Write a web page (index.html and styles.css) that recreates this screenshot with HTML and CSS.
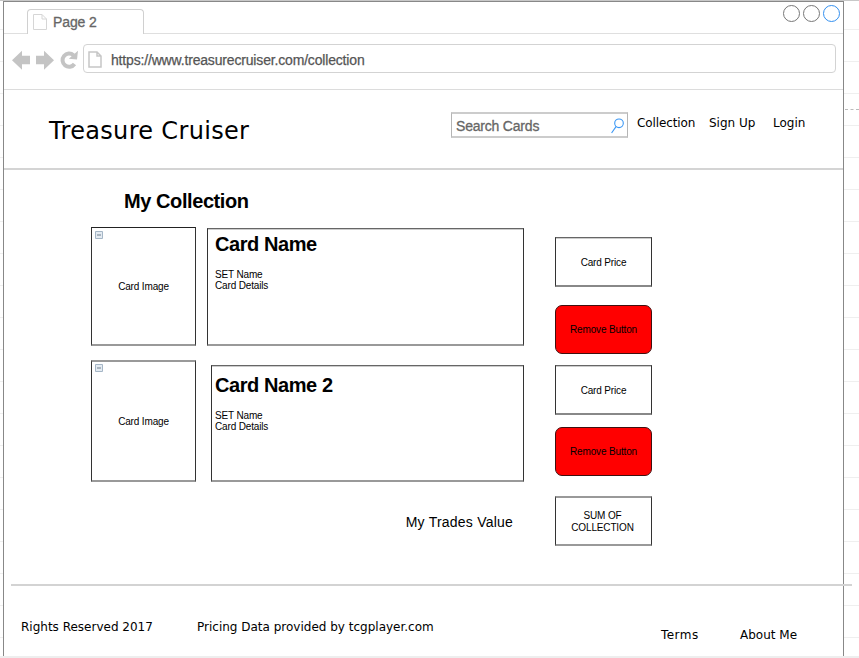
FILE: index.html
```html
<!DOCTYPE html>
<html lang="en">
<head>
<meta charset="utf-8">
<title>Treasure Cruiser</title>
<link rel="stylesheet" href="styles.css">
</head>
<body>
<div class="window">
  <div class="tabs">
    <div class="tab">
      <svg class="tab-icon" width="14" height="16" viewBox="0 0 14 16"><path d="M.5.5H9L13.5 5V15.5H.5ZM9 .5V5H13.5" fill="none" stroke="#d6d6d6"/></svg>
      <span class="tab-title">Page 2</span>
    </div>
    <div class="controls"><i></i><i></i><i class="active"></i></div>
  </div>
  <div class="toolbar">
    <svg class="nav-icons" width="67" height="22" viewBox="0 0 67 22">
      <path d="M0 10.2 10 .7V5.7H18V14.3H10V19.7ZM42 10.2 32 .7V5.7H24V14.3H32V19.7Z" fill="#c4c4c4"/>
      <path d="M62.5 14A6.6 6.6 0 1 1 61.5 5.2" fill="none" stroke="#c4c4c4" stroke-width="4"/>
      <path d="M66 .7 65 9.5 56.8 8.8Z" fill="#c4c4c4"/>
    </svg>
    <div class="address">
      <svg class="file" width="14" height="17" viewBox="0 0 14 17"><path d="M1 1H9L13 5V16H1ZM9 1V5H13" fill="none" stroke="#c6c6c6" stroke-width="1.5"/></svg>
      <span class="url">https://www.treasurecruiser.com/collection</span>
    </div>
  </div>
  <header class="header">
    <div class="brand">Treasure Cruiser</div>
    <div class="search"><span>Search Cards</span>
      <svg width="14" height="16" viewBox="0 0 14 16"><g fill="none" stroke="#3a97f5" stroke-width="1.1"><circle cx="9" cy="5.3" r="4.3"/><path d="M6 8.6 1.6 15"/></g></svg>
    </div>
    <nav class="nav"><span class="n1">Collection</span><span class="n2">Sign Up</span><span class="n3">Login</span></nav>
  </header>
  <main class="main">
    <h1 class="title">My Collection</h1>
    <div class="board">
      <div class="images">
        <div class="box image first"><svg class="collapse" width="8" height="8" viewBox="0 0 8 8"><path d="M.5.5H7.5V7.5H.5Z" fill="#e4ebf2" stroke="#a5b6c6"/><path d="M2 4H6" stroke="#70808e"/></svg><span>Card Image</span></div>
        <div class="box image second"><svg class="collapse" width="8" height="8" viewBox="0 0 8 8"><path d="M.5.5H7.5V7.5H.5Z" fill="#e4ebf2" stroke="#a5b6c6"/><path d="M2 4H6" stroke="#70808e"/></svg><span>Card Image</span></div>
      </div>
      <div class="details">
        <section class="box card one"><h2>Card Name</h2><p>SET Name<br>Card Details</p></section>
        <section class="box card two"><h2>Card Name 2</h2><p>SET Name<br>Card Details</p></section>
        <div class="total-label"><span>My Trades Value</span></div>
      </div>
      <div class="actions">
        <div class="box price">Card Price</div>
        <div class="remove a">Remove Button</div>
        <div class="box price b">Card Price</div>
        <div class="remove b">Remove Button</div>
        <div class="box sum">SUM OF<br>COLLECTION</div>
      </div>
    </div>
  </main>
  <footer class="footer"><span class="f1">Rights Reserved 2017</span><span class="f2">Pricing Data provided by tcgplayer.com</span><span class="f3">Terms</span><span class="f4">About Me</span></footer>
</div>
<div class="margin"></div>
</body>
</html>
```
FILE: styles.css
```css
* { box-sizing: border-box; }
body {
  margin: 0;
  width: 859px;
  height: 658px;
  overflow: hidden;
  display: flex;
  padding-left: 3px;
  color: #000;
  border-top: 1px solid #c8c8c8;
  border-bottom: 2px solid #eee;
  font-family: "Liberation Sans", Arial, sans-serif;
  background: repeating-linear-gradient(#fff 0 29px, #efefef 29px 30px, #fff 30px 32px);
}
svg { display: block; flex: none; }
h1, h2, p { margin: 0; }
.window {
  width: 841px;
  height: 655px;
  flex: none;
  display: flex;
  flex-direction: column;
  background: #fff;
  border: solid #888;
  border-width: 1px 1px 0;
}
.margin {
  height: 109px;
  width: 14px;
  margin-left: 1px;
  border-bottom: 1px dashed #bbb;
}
.tabs {
  height: 32px;
  flex: none;
  display: flex;
  justify-content: space-between;
  align-items: flex-end;
  background: linear-gradient(#dfdfdf, #dfdfdf) bottom / 100% 1px no-repeat;
  padding: 0 3px 0 23px;
}
.tab {
  width: 117px;
  height: 25px;
  display: flex;
  padding: 4px 0 0 5px;
  background: #fff;
  border: 1px solid #d0d0d0;
  border-bottom: 0;
  border-radius: 4px 4px 0 0;
}
.tab-title { margin: -1px 0 0 6px; font-size: 14px; line-height: 18px; letter-spacing: -.1px; color: #666; -webkit-text-stroke: .3px #666; }
.controls { display: flex; gap: 3px; align-self: flex-start; padding-top: 3px; }
.controls i { width: 17px; height: 17px; border: 1px solid #777; border-radius: 50%; }
.controls .active { border-color: #3390f0; }
.toolbar {
  height: 56px;
  flex: none;
  display: flex;
  padding: 10px 7px 0 8px;
  border-bottom: 1px solid #dcdcdc;
}
.nav-icons { margin: 6px 4px 0 0; }
.address {
  flex: 1;
  height: 29px;
  display: flex;
  align-items: center;
  padding-left: 4px;
  border: 1px solid #d3d3d3;
  border-radius: 4px;
}
.file { margin-top: 2px; }
.url { margin: 3px 0 0 9px; font-size: 14px; line-height: 18px; letter-spacing: -.17px; color: #555; -webkit-text-stroke: .25px #555; }
.header {
  height: 80px;
  flex: none;
  display: flex;
  padding-left: 45px;
  border-bottom: 2px solid #d4d4d4;
  font-family: "DejaVu Sans", Verdana, sans-serif;
}
.brand { width: 402px; padding-top: 26px; font-size: 24px; line-height: 30px; letter-spacing: .33px; }
.search {
  width: 177px;
  height: 26px;
  margin-top: 22px;
  display: flex;
  justify-content: space-between;
  padding: 4px 3px 0 4px;
  border: solid #b5b5b5;
  border-width: 2px 1px;
  border-top-color: #ccc;
  border-bottom-color: #ccc;
  font: 14px/16px "Liberation Sans", Arial, sans-serif;
  letter-spacing: -.2px;
  color: #666;
  -webkit-text-stroke: .3px #666;
}
.nav { display: flex; padding: 25px 0 0 9px; font-size: 12px; line-height: 16px; white-space: nowrap; }
.n1 { width: 72px; letter-spacing: -.1px; }
.n2 { width: 64px; }
.main { height: 414px; flex: none; padding: 19px 0 0 87px; }
.title { height: 38px; padding-left: 33px; font-size: 20px; line-height: 24px; letter-spacing: -.42px; }
.board { display: flex; align-items: flex-start; font-size: 10px; line-height: 11px; letter-spacing: -.15px; }
.box {
  border: 1px solid #333;
  border-top-color: #666;
  border-bottom: 2px solid #999;
  box-shadow: inset 0 1px #ccc;
}
.images { width: 105px; display: flex; flex-direction: column; gap: 14px; margin-right: 11px; }
.image { position: relative; display: flex; align-items: center; justify-content: center; }
.image.first { height: 119px; border-top-color: #222; box-shadow: none; }
.image.second { height: 122px; border-top: 2px solid #999; box-shadow: none; }
.collapse { position: absolute; top: 3px; left: 3px; }
.image.second .collapse { top: 2px; }
.details { width: 317px; padding-top: 1px; margin-right: 31px; }
.card { padding: 3px 0 0 7px; }
.card.one { height: 118px; }
.card.two { height: 117px; margin: 19px 0 0 4px; padding: 7px 0 0 3px; }
.card h2 { font-size: 20px; line-height: 24px; margin-bottom: 13px; letter-spacing: -.42px; }
.total-label { display: flex; justify-content: flex-end; padding: 32px 11px 0 0; font-size: 14px; line-height: 16px; letter-spacing: .22px; }
.actions { width: 97px; padding-top: 10px; text-align: center; }
.price, .remove, .sum { height: 50px; display: flex; align-items: center; justify-content: center; }
.price { padding-top: 2px; border-bottom-color: #888; }
.remove { height: 49px; background: #f00; border: 1px solid #401010; border-radius: 7px; }
.remove.a { margin: 18px 0 11px; }
.remove.b { margin: 12px 0 20px; }
.sum { padding: 2px 2px 0 0; border-top: 2px solid #999; box-shadow: none; line-height: 12px; }
.footer {
  width: 841px;
  height: 71px;
  flex: none;
  margin-left: 7px;
  display: flex;
  padding: 33px 0 0 10px;
  border-top: 2px solid #d3d3d3;
  font: 12px/16px "DejaVu Sans", Verdana, sans-serif;
  white-space: nowrap;
}
.f1 { width: 176px; }
.f2 { width: 464px; }
.f3 { width: 79px; letter-spacing: .45px; }
.f3, .f4 { padding-top: 8px; }
```
